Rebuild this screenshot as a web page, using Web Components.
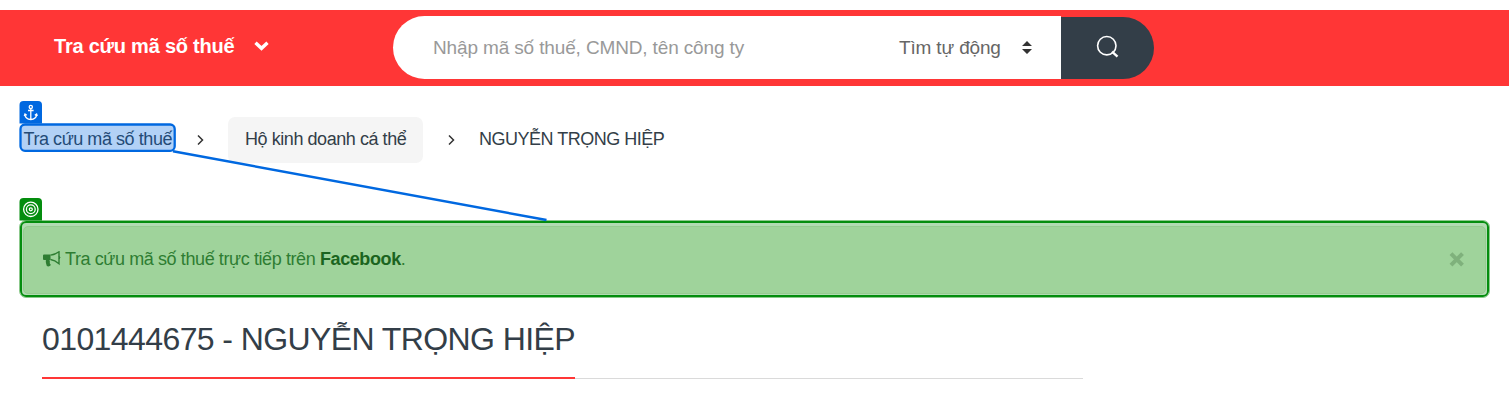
<!DOCTYPE html>
<html lang="vi">
<head>
<meta charset="utf-8">
<title>Tra cứu mã số thuế</title>
<style>
html,body{margin:0;background:#fff}
body{font-family:"Liberation Sans",Arial,sans-serif;color:#333e48;height:402px;overflow:hidden}
</style>
</head>
<body>
<tax-page></tax-page>
<script>
const define = (name, html) => customElements.define(name, class extends HTMLElement {
  constructor(){ super(); this.attachShadow({mode:'open'}).innerHTML = html; }
});

define('search-bar', `<style>
:host{display:flex;width:761px;height:63px;font-size:19px}
.field{box-sizing:border-box;width:668px;height:63px;background:#fff;border-radius:32px 0 0 32px;display:flex;align-items:center;padding-left:40px}
.q{width:466px;color:#999;white-space:nowrap;letter-spacing:-.14px}
.kind{width:123px;color:#666;white-space:nowrap;letter-spacing:-.16px}
.go{width:93px;height:62px;margin-top:1px;background:#333e48;border-radius:0 31px 31px 0}
svg{display:block}
</style><div class="field"><span class="q"><slot name="hint"></slot></span><span class="kind"><slot name="kind"></slot></span>
<svg width="10" height="13" viewBox="0 0 10 13" fill="#333"><path d="M0 5L5 0l5 5zM0 8h10l-5 5z"/></svg></div>
<div class="go"><svg width="93" height="62" fill="none" stroke="#fff"><circle cx="45.800" cy="28.700" r="9.200" stroke-width="1.600"/><path d="M51 34.600l5.500 5" stroke-width="2.400"/></svg></div>`);

define('site-header', `<style>
:host{display:flex;box-sizing:border-box;height:76px;margin-top:10px;background:#ff3636;padding:6px 0 0 54px}
.menu{display:flex;width:339px;height:60px;align-items:center;color:#fff;font-weight:bold;font-size:20px}
.t{width:200px;white-space:nowrap;letter-spacing:-.23px}
</style><div class="menu"><span class="t"><slot></slot></span><svg width="15" height="10" viewBox="0 0 15 10"><path d="M1.500 1.700L7.500 7.300l6-5.600" stroke="#fff" stroke-width="3.400" fill="none"/></svg></div>
<search-bar><span slot="hint">Nhập mã số thuế, CMND, tên công ty</span><span slot="kind">Tìm tự động</span></search-bar>`);

define('bread-crumb', `<style>
:host{display:flex;height:46px;padding:31px 0 0 24px;align-items:center;font-size:18px;letter-spacing:-.44px;white-space:nowrap}
.a{width:173px;margin-left:-.5px;margin-right:.5px}
svg{width:7px;height:10px;fill:none;stroke:#333;stroke-width:1.5}
.b{box-sizing:border-box;width:195px;height:46px;margin-left:24px;padding-left:17px;line-height:44px;background:#f5f5f5;border-radius:7px}
.s2{margin:0 24px 0 25px}
.a,.c{position:relative;top:-1px}.c{letter-spacing:-.5px}
</style><span class="a"><slot name="home"></slot></span><svg viewBox="0 0 7 10"><path d="M1 .5L5.500 5 1 9.500"/></svg>
<div class="b"><slot name="group"></slot></div><svg class="s2" viewBox="0 0 7 10"><path d="M1 .5L5.500 5 1 9.500"/></svg><span class="c"><slot name="name"></slot></span>`);

define('notice-bar', `<style>
:host{display:block;box-sizing:border-box;width:1471px;height:78px;margin:57px 0 0 19px;border:1px solid #8cc98c;border-radius:7px;font-size:18px;letter-spacing:-.4px}
.ring{box-sizing:border-box;height:76px;border:2px solid #048d0e;border-radius:6px;background:#b2dbb3;padding:3px 1px 1px}
.box{box-sizing:border-box;height:68px;border:1px solid #96cb91;border-radius:5px;background:#9fd39b;color:#2e7d32;display:flex;align-items:center;padding:0 20px 2px 19px}
.icon{margin-right:4px}.msg{flex:1;white-space:nowrap}
</style><div class="ring"><div class="box">
<svg class="icon" width="18" height="16" viewBox="0 0 18 16"><path d="M0 4.500Q0 3.500 1 3.500H7.500V9H6.800c-1 1 .8 1.500 0 2.400-.5.800.8 1.400 1 2.700-.8 1.600-3.300 1.600-4.100.7C3.200 12.800 2.500 11 2.900 9H1Q0 9 0 8z" fill="#2e7d32"/><path d="M7.500 4.100C11 3.700 13.500 2.700 16 .8v11.900C13.500 10.500 11 9 7.500 8.500" fill="none" stroke="#2e7d32" stroke-width="1.400"/><path d="M16 5.300q1.800 1.300 0 2.700" fill="#2e7d32" stroke="#2e7d32"/></svg>
<span class="msg"><slot></slot></span>
<svg width="16" height="15" viewBox="0 0 16 15"><path d="M2 1.700l11.500 11.500M13.500 1.700L2 13.200" stroke="#7fb17c" stroke-width="4"/></svg></div></div>`);

define('page-title', `<style>
:host{display:block;box-sizing:border-box;margin:0 0 0 42px;width:1041px;height:81px;border-bottom:1px solid #dadada}
h1{box-sizing:border-box;margin:0;width:533px;height:81px;border-bottom:2px solid #ff3636;padding-top:21px;line-height:40px;font-size:32px;font-weight:normal;letter-spacing:-.59px;white-space:nowrap}
</style><h1><slot></slot></h1>`);

define('link-overlay', `<style>
:host{position:absolute;left:0;top:0;width:1509px;height:402px}svg{display:block}
</style><svg width="1509" height="402" fill="none">
<path d="M173 151.300L546.500 220" stroke="#0068e0" stroke-width="2.500"/>
<rect x="20.500" y="124.500" width="154.200" height="26.300" rx="4.500" fill="#0068e0" fill-opacity=".3" stroke="#0068e0" stroke-width="2.300"/>
<path d="M19.500 123.500V105q0-4 4-4H38q4 0 4 4v18.500z" fill="#0068e0"/>
<g stroke="#fff" stroke-width="1.300"><circle cx="30.800" cy="106.900" r="1.600"/><path d="M30.800 108.500V119M28 110.500h5.600M24.800 114.300q.6 4.800 6 5.200 5.400-.4 6-5.200M24.300 116l.7-2 1.800 1.200M34.800 115.200l1.800-1.200.7 2"/></g>
<path d="M19.500 220.500V202q0-4 4-4H38q4 0 4 4v18.500z" fill="#048d0e"/>
<g stroke="#fff" stroke-width="1.300"><circle cx="30.800" cy="209.300" r="7.200"/><circle cx="30.800" cy="209.300" r="4.400"/><circle cx="30.800" cy="209.300" r="1.500"/></g>
</svg>`);

define('tax-page', `<style>:host{display:flow-root;position:relative;height:402px}b{color:#1b6420}</style>
<site-header>Tra cứu mã số thuế</site-header>
<bread-crumb><span slot="home">Tra cứu mã số thuế</span><span slot="group">Hộ kinh doanh cá thể</span><span slot="name">NGUYỄN TRỌNG HIỆP</span></bread-crumb>
<notice-bar>Tra cứu mã số thuế trực tiếp trên <b>Facebook</b>.</notice-bar>
<page-title>0101444675 - NGUYỄN TRỌNG HIỆP</page-title>
<link-overlay></link-overlay>`);
</script>
</body>
</html>
